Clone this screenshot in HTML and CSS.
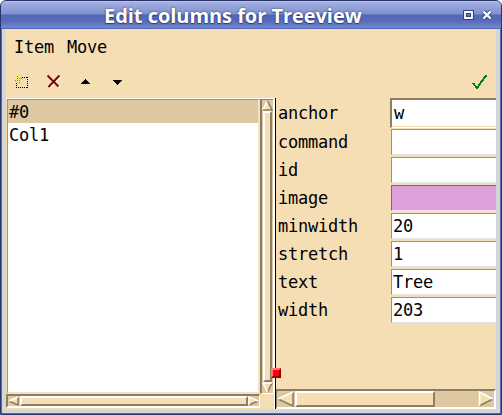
FILE: index.html
```html
<!DOCTYPE html>
<html lang="en">
<head>
<meta charset="utf-8">
<title>Edit columns for Treeview</title>
<link rel="stylesheet" href="styles.css">
</head>
<body>
<div class="window">
  <header class="titlebar">
    <h1>Edit columns for Treeview</h1>
    <svg class="controls" width="32" height="14" viewBox="0 0 32 14">
      <g fill="none" stroke="#36457c" stroke-width="4"><path d="M4 4h7v6H4z"/><path d="M22.500 3.500l7 7m0-7l-7 7"/></g>
      <g fill="none" stroke="#fff" stroke-width="2"><path d="M4 4h7v6H4z" stroke-width="1.800"/><path d="M22.500 3.500l7 7m0-7l-7 7" stroke-width="2.400"/></g>
    </svg>
  </header>
  <main class="client">
    <nav class="menu"><span>Item</span><span>Move</span></nav>
    <div class="toolbar">
      <svg width="16" height="16" shape-rendering="crispEdges">
        <path d="M2 13.500h12M8 3.500h6M2.500 7v7M13.500 3v11" fill="none" stroke="#000" stroke-dasharray="1 1"/>
        <path d="M4 2h1v3H4zM4 7h1v3H4zM1 5h3v1H1zM6 5h3v1H6zM1 2h1v1H1zM2 3h1v1H2zM7 2h1v1H7zM6 3h1v1H6zM2 7h1v1H2zM1 8h1v1H1zM6 7h1v1H6zM7 8h1v1H7z" fill="#f0f000"/>
        <path d="M3 4h1v1H3zM5 4h1v1H5zM3 6h1v1H3zM5 6h1v1H5zM3 2h1v1H3zM7 4h1v1H7zM1 6h1v1H1zM5 8h1v1H5z" fill="#8b8b40"/>
      </svg>
      <svg width="16" height="16">
        <path d="M3 2.500l11 11M14.500 3l-10 10.500" stroke="#fff" stroke-width="1.500"/>
        <path d="M1.500 1.500l11 11M13.500 1.500L2.500 13" stroke="#800000" stroke-width="1.900" fill="none"/>
      </svg>
      <svg width="16" height="16" shape-rendering="crispEdges"><path d="M7 5h1v1h1v1h1v1h1v1h1v1H3V9h1V8h1V7h1V6h1z"/></svg>
      <svg width="16" height="16" shape-rendering="crispEdges"><path d="M3 6h9v1h-1v1h-1v1H9v1H8v1H7v-1H6V9H5V8H4V7H3z"/></svg>
      <svg class="apply" width="16" height="16" shape-rendering="crispEdges"><path d="M1 9l4 5L14.500 1" stroke="#008000" stroke-width="2" fill="none"/></svg>
    </div>
    <div class="panes">
      <section class="left">
        <div class="tree"><div class="row selected">#0</div><div class="row">Col1</div></div>
        <div class="scroll vertical">
          <svg width="11" height="11"><path d="M1 10L5.500 1l4.500 9z" fill="#f5deb3"/><path d="M1 10L5.500 1" stroke="#fff" stroke-width="2"/><path d="M5.500 1L10 10H1" fill="none" stroke="#8d7d62" stroke-width="1.500"/></svg>
          <i class="thumb"></i>
          <svg width="11" height="11"><path d="M1 1h9L5.500 10z" fill="#f5deb3"/><path d="M10 1L5.500 10" stroke="#8d7d62" stroke-width="1.500"/><path d="M10 1H1l4.500 9" fill="none" stroke="#fff" stroke-width="1.500"/></svg>
        </div>
        <div class="scroll horizontal">
          <svg width="12" height="10"><path d="M10 1v8L1 5z" fill="#f5deb3"/><path d="M10 1v8L1 5" fill="none" stroke="#8d7d62" stroke-width="1.500"/><path d="M1 5l9-4" stroke="#fff" stroke-width="1.500"/></svg>
          <i class="thumb"></i>
          <svg width="11" height="10"><path d="M1 1v8l9-4z" fill="#f5deb3"/><path d="M1 9l9-4" stroke="#8d7d62" stroke-width="1.500"/><path d="M1 9V1l9 4" fill="none" stroke="#fff" stroke-width="1.500"/></svg>
        </div>
      </section>
      <div class="sash"><i class="handle"></i></div>
      <section class="right">
        <div class="form">
          <label>anchor</label><div class="field focus">w</div>
          <label>command</label><div class="field"></div>
          <label>id</label><div class="field"></div>
          <label>image</label><div class="field plum"></div>
          <label>minwidth</label><div class="field">20</div>
          <label>stretch</label><div class="field">1</div>
          <label>text</label><div class="field">Tree</div>
          <label>width</label><div class="field">203</div>
        </div>
        <div class="scroll wide">
          <svg width="17" height="16"><path d="M16 1v14L1 8z" fill="#f5deb3"/><path d="M16 1v14L1 8" fill="none" stroke="#8d7d62" stroke-width="1.600"/><path d="M1 8l15-7" stroke="#fff" stroke-width="1.600"/></svg>
          <i class="thumb"></i>
          <svg width="17" height="16"><path d="M1 1v14l14-7z" fill="#f5deb3"/><path d="M1 15l14-7" stroke="#8d7d62" stroke-width="1.600"/><path d="M1.500 15V1L15 8" fill="none" stroke="#fff" stroke-width="1.600"/></svg>
        </div>
      </section>
    </div>
  </main>
</div>
</body>
</html>
```
FILE: styles.css
```css
* { box-sizing: border-box; }
body { margin: 0; background: #fff; overflow: hidden; }
svg { display: block; flex: none; }
.window {
  width: 502px; height: 415px;
  border: 1px solid #29356b;
  border-radius: 6px 6px 0 0;
  background: #d6d6d6;
  box-shadow: inset 0 0 0 1px #5069b8;
  overflow: hidden;
  display: flex; flex-direction: column;
  font: 17px/22px "DejaVu Sans Mono", monospace;
  letter-spacing: -0.235px;
  color: #000;
}
.titlebar {
  height: 28px; flex: none;
  display: flex; align-items: center;
  padding-left: 103px;
  background: linear-gradient(#b9c5ec 0, #a1addf 2px, #7f90cf 13px, #5268b7 14px, #566cbb 20px, #7588cc 27px, #5069b8 27px);
}
.titlebar h1 {
  margin: 0; width: 259px; white-space: nowrap;
  font: bold 20px/26px "Open Sans", "Noto Sans", sans-serif;
  letter-spacing: -0.04px;
  position: relative; top: 1px;
  color: #fff;
  text-shadow: 0 1px 1px #2f3d75, 0 0 2px #2f3d75;
}
.controls { margin-left: 98px; }
.client {
  width: 490px; height: 380px; margin-left: 5px;
  background: #f5deb3;
  display: flex; flex-direction: column;
}
.menu { height: 37px; padding: 7px 0 0 8px; display: flex; gap: 13px; }
.toolbar { height: 32px; padding: 8px 8px 0; display: flex; gap: 16px; }
.apply { margin-left: auto; }
.panes { height: 311px; display: flex; }
.left {
  width: 268px;
  display: grid; grid-template-columns: 254px 14px; grid-template-rows: 295px 15px;
  border-top: 1px solid #fff;
}
.tree {
  height: 295px; margin-left: 1px;
  border: solid; border-width: 1px 2px 2px 1px;
  border-color: #9b958b #f2e2c5 #f2e2c5 #9b958b;
  background: #fff;
}
.row { height: 23px; line-height: 24px; padding-left: 1px; }
.selected { background: #dec8a2; }
.scroll {
  background: #dec8a2;
  border: 2px solid; border-color: #8d7d62 #fff #fff #8d7d62;
  display: flex;
}
.thumb {
  flex: 1; background: #f5deb3;
  border: 2px solid; border-color: #fff #8d7d62 #8d7d62 #fff;
}
.vertical { width: 14px; height: 295px; flex-direction: column; align-items: center; border-width: 1px 1px 1px 2px; }
.vertical .thumb { width: 9px; }
.horizontal { height: 14px; width: 254px; border-width: 2px 1px 2px 2px; }
.sash { width: 2px; border-left: 1px solid #fff; background: #000; position: relative; }
.handle {
  position: absolute; z-index: 1; left: -4px; top: 270px; width: 10px; height: 10px;
  background: red; border: 2px solid; border-color: #ff7777 #900 #900 #ff7777;
}
.right { width: 220px; display: flex; flex-direction: column; justify-content: space-between; overflow: hidden; }
.form {
  display: grid; grid-template-columns: 114px 106px; grid-template-rows: 31px repeat(7, 28px);
}
.form label { padding-left: 2px; line-height: 26px; }
.form label:first-child { line-height: 31px; }
.field {
  height: 26px; margin-left: 1px; padding-left: 1px; line-height: 25px; background: #fff;
  border: solid; border-width: 1px 0 1px 1px; border-color: #999289 #999289 #e5e5e5;
}
.focus {
  height: 30px; margin-left: 0; padding-left: 2px; line-height: 27px;
  border-width: 2px 0 1px 2px; border-color: #8d7d62 #8d7d62 #fff;
  box-shadow: inset 0 -1px #f5deb3;
}
.plum { background: #dda0dd; border-color: #856085 #856085 #ffe0ff; }
.wide { height: 20px; border-width: 2px 2px 2px 1px; }
.wide .thumb { flex: none; width: 140px; margin-left: 1px; margin-right: 43px; }
```
